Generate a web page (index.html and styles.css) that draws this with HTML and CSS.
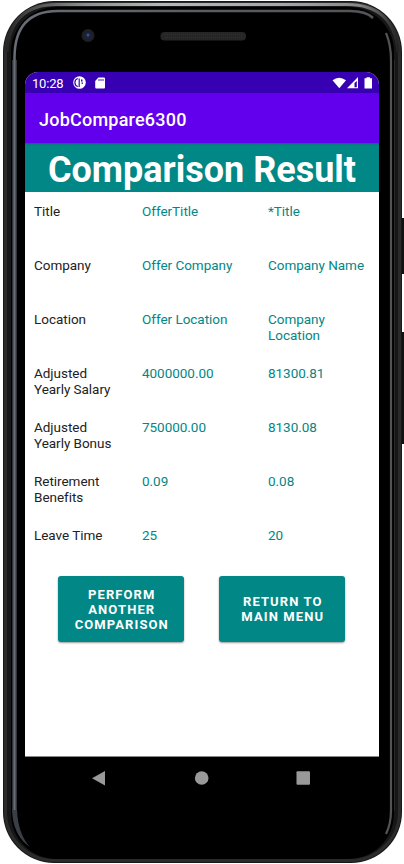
FILE: index.html
```
<!DOCTYPE html>
<html lang="en">
<head>
<meta charset="utf-8">
<title>JobCompare6300</title>
<link rel="stylesheet" href="styles.css">
</head>
<body>
<div class="stage">
<svg class="frame" width="404" height="864" viewBox="0 0 404 864" aria-hidden="true">
  <defs>
    <linearGradient id="topEdge" gradientUnits="userSpaceOnUse" x1="7" x2="398" y1="0" y2="0">
      <stop offset="0" stop-color="#262626"/><stop offset=".08" stop-color="#555"/><stop offset=".2" stop-color="#8d9092"/><stop offset=".4" stop-color="#b4b8ba"/><stop offset=".7" stop-color="#a5a8aa"/><stop offset=".9" stop-color="#888"/><stop offset="1" stop-color="#222"/>
    </linearGradient>
    <linearGradient id="rim" gradientUnits="userSpaceOnUse" x1="14" x2="391" y1="0" y2="0">
      <stop offset="0" stop-color="#686d77"/><stop offset=".5" stop-color="#5c5d61"/><stop offset="1" stop-color="#535257"/>
    </linearGradient>
  </defs>
  <path d="M401 218h3v56h-3zM401 332h3v112h-3z" fill="#111"/>
  <rect x="3" y="1" width="399" height="862" rx="51" fill="#171717"/>
  <rect x="5.500" y="3.500" width="394" height="857" rx="49" fill="none" stroke="#2b2b2b" stroke-width="3"/>
  <path d="M7 52Q10 4.500 57 4.500H347Q394 4.500 398 52" fill="none" stroke="url(#topEdge)" stroke-width="3"/>
  <rect x="11" y="7" width="383" height="852" rx="45" fill="#000"/>
  <path d="M14.500 812V58Q14.500 11 58 11H350Q366 11 373 18" fill="none" stroke="url(#rim)" stroke-width="2.500"/>
  <path d="M12.500 812V60M16.500 812V60" stroke="#30343a"/>
  <path d="M12 810H17Q18 834 30 847Q13 836 12 810z" fill="#3a3e45"/>
  <path d="M386 33Q391 45 391 60V810Q391 824 386 834" fill="none" stroke="#535257" stroke-width="2.200"/>
  <path d="M394.500 60V810" stroke="#2a2a2a"/>
  <circle cx="88" cy="35.500" r="6.500" fill="#202020"/><circle cx="88" cy="35.500" r="3.500" fill="#182344"/><circle cx="88" cy="35" r="1.500" fill="#3d4d80"/>
  <rect x="160.500" y="32" width="85.500" height="8.500" rx="4" fill="#262626"/>
  <path d="M165 34.500H242M165 37.500H242" stroke="#303030" stroke-dasharray="1 1"/>
</svg>
<main class="screen">
  <header class="status">
    <span class="time">10:28</span>
    <svg width="13" height="13" viewBox="0 0 13 13"><circle cx="6.500" cy="6.500" r="6.300" fill="#fff"/><path d="M4.800 2.500A4.200 4.200 0 0 0 4.800 10.500M6.200 2.500V11M8.500 7.200H10" fill="none" stroke="#3700b3" stroke-width="1.200"/><path d="M8 3.500h1.500v2H8z" fill="#3700b3"/></svg>
    <svg class="ico-sd" width="10" height="12" viewBox="0 0 10 12"><path fill="#fff" d="M3.500.5H9q1 0 1 1V10.500q0 1-1 1H1.200q-1 0-1-1V4z"/><path d="M4 2v2M6 2v2M8 2v2" stroke="#3700b3" stroke-width=".9"/></svg>
    <svg class="ico-right" width="42" height="12" viewBox="0 0 42 12"><path fill="#fff" d="M.5 3.300Q7 -2 14 3.300L7.300 11.300z"/><path fill="#fff" fill-rule="evenodd" d="M26 0V11.300H15zM24.800 4L22.500 6V10.200H24.800z"/><path fill="#fff" d="M32.500 1.300h2V.2h3.500v1.100h2V11.500h-7.500z"/></svg>
  </header>
  <div class="appbar">JobCompare6300</div>
  <h1>Comparison Result</h1>
  <div class="grid">
    <span>Title</span><b>OfferTitle</b><b>*Title</b>
    <span>Company</span><b>Offer Company</b><b>Company Name</b>
    <span>Location</span><b>Offer Location</b><b>Company<br>Location</b>
    <span>Adjusted<br>Yearly Salary</span><b>4000000.00</b><b>81300.81</b>
    <span>Adjusted<br>Yearly Bonus</span><b>750000.00</b><b>8130.08</b>
    <span>Retirement<br>Benefits</span><b>0.09</b><b>0.08</b>
    <span>Leave Time</span><b>25</b><b>20</b>
  </div>
  <div class="actions">
    <button>PERFORM<br>ANOTHER<br>COMPARISON</button>
    <button>RETURN TO<br>MAIN MENU</button>
  </div>
</main>
<nav class="nav">
  <svg width="354" height="42" viewBox="0 0 354 42"><path fill="#999" d="M67 21.200L80 14V28.500z"/><circle cx="176.700" cy="21" r="6.800" fill="#999"/><rect x="271.500" y="14.200" width="13.500" height="13.500" rx="1" fill="#999"/></svg>
</nav>
</div>
</body>
</html>
```
FILE: styles.css
```
body {
  margin: 0;
  background: #fff;
  font-family: Roboto, sans-serif;
}
.stage {
  position: relative;
  box-sizing: border-box;
  width: 404px;
  height: 864px;
  padding: 72px 25px 0;
  overflow: hidden;
}
.frame {
  position: absolute;
  left: 0;
  top: 0;
}
svg {
  display: block;
}
.screen {
  position: relative;
  box-sizing: border-box;
  width: 354px;
  height: 685px;
  background: #fff;
  border-bottom: 1px solid #888;
  border-radius: 13px 13px 0 0;
  overflow: hidden;
}
.status {
  display: flex;
  align-items: center;
  height: 21px;
  padding: 0 5.5px 0 7px;
  background: #3700b3;
  color: #fff;
}
.time {
  width: 41px;
  font-size: 13px;
  line-height: 21px;
  letter-spacing: -.2px;
  padding-top: 1px;
}
.ico-sd {
  margin-left: 9px;
}
.ico-right {
  margin-left: auto;
}
.appbar {
  height: 50px;
  padding-left: 14px;
  background: #6200ee;
  color: #fff;
  font-size: 18px;
  font-weight: 500;
  line-height: 53px;
  letter-spacing: .22px;
}
h1 {
  height: 49px;
  margin: 0;
  background: #018786;
  box-shadow: inset 0 2px 2px -1px #245b73;
  color: #fff;
  font-size: 36px;
  font-weight: 700;
  line-height: 54px;
  text-align: center;
  white-space: nowrap;
}
.grid {
  display: grid;
  grid-template-columns: 108px 126px 1fr;
  grid-auto-rows: 54px;
  padding: 11px 0 0 9px;
  color: #222;
  font-size: 13.5px;
  line-height: 16px;
  letter-spacing: -.03px;
}
.grid b {
  color: #018786;
  font-weight: 400;
}
.actions {
  display: flex;
  gap: 35px;
  padding: 0 33px;
  margin-top: -5px;
}
button {
  width: 126px;
  height: 66px;
  padding: 0 0 0 1.5px;
  border: 0;
  border-radius: 3px;
  background: #018786;
  box-shadow: 0 1px 2px #0006;
  color: #fff;
  font: 700 13px/15px Roboto, sans-serif;
  letter-spacing: 1.1px;
}
.nav {
  position: relative;
  height: 42px;
}
```
